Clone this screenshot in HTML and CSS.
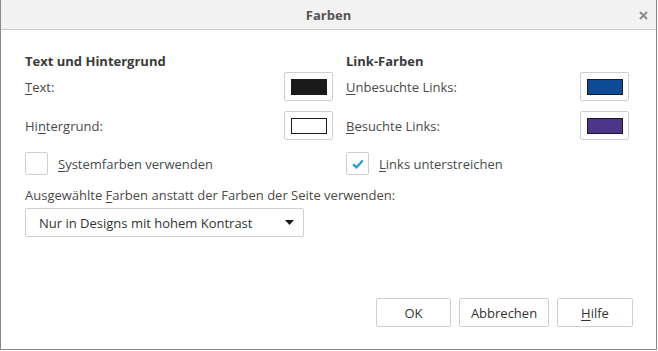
FILE: index.html
```html
<!DOCTYPE html>
<html lang="de">
<head>
<meta charset="utf-8">
<title>Farben</title>
<link rel="stylesheet" href="styles.css">
</head>
<body>
<div class="window">
  <div class="titlebar">
    <span class="title">Farben</span>
    <svg class="close" width="9" height="9" viewBox="0 0 9 9"><path d="M1 1 L8 8 M8 1 L1 8" stroke="#8c8c8c" stroke-width="2" fill="none"/></svg>
  </div>
  <div class="content">
    <div class="columns">
      <div class="col col-left">
        <div class="heading">Text und Hintergrund</div>
        <div class="row">
          <span class="label"><u>T</u>ext:</span>
          <button class="colorbtn"><span class="swatch swatch-black"></span></button>
        </div>
        <div class="row row-second">
          <span class="label">Hi<u>n</u>tergrund:</span>
          <button class="colorbtn"><span class="swatch swatch-white"></span></button>
        </div>
        <div class="checkrow">
          <span class="checkbox"></span>
          <span class="label"><u>S</u>ystemfarben verwenden</span>
        </div>
      </div>
      <div class="col col-right">
        <div class="heading">Link-Farben</div>
        <div class="row">
          <span class="label"><u>U</u>nbesuchte Links:</span>
          <button class="colorbtn"><span class="swatch swatch-blue"></span></button>
        </div>
        <div class="row row-second">
          <span class="label"><u>B</u>esuchte Links:</span>
          <button class="colorbtn"><span class="swatch swatch-purple"></span></button>
        </div>
        <div class="checkrow">
          <span class="checkbox">
            <svg width="12" height="10" viewBox="0 0 12 10"><path d="M1.2 5.2 L4.4 8.4 L10.8 1.4" stroke="#1d9ad8" stroke-width="2.2" fill="none"/></svg>
          </span>
          <span class="label label-check-right"><u>L</u>inks unterstreichen</span>
        </div>
      </div>
    </div>
    <div class="override-label">Ausgewählte <u>F</u>arben anstatt der Farben der Seite verwenden:</div>
    <div class="dropdown">
      <span>Nur in Designs mit hohem Kontrast</span>
      <svg class="arrow" width="9" height="5" viewBox="0 0 9 5"><path d="M0 0 H9 L4.5 5 Z" fill="#1a1a1a"/></svg>
    </div>
  </div>
  <div class="footer">
    <button class="btn btn-ok">OK</button>
    <button class="btn btn-cancel">Abbrechen</button>
    <button class="btn btn-help"><u>H</u>ilfe</button>
  </div>
</div>
</body>
</html>
```

FILE: styles.css
```css
html, body {
  margin: 0;
  padding: 0;
  background: #ffffff;
}

body {
  font-family: "Open Sans", "Noto Sans", sans-serif;
  font-size: 13px;
  color: #4a4a4a;
}

u {
  text-decoration: underline;
  text-underline-offset: 2px;
  text-decoration-thickness: 1px;
}

.window {
  box-sizing: border-box;
  width: 657px;
  height: 350px;
  border: 1px solid #8a8a8a;
  border-top: none;
  display: flex;
  flex-direction: column;
  background: #ffffff;
}

.titlebar {
  height: 29px;
  border-bottom: 1px solid #c8c8c8;
  background: #f2f2f2;
  display: flex;
  align-items: center;
  justify-content: center;
  position: relative;
}

.title {
  font-weight: 700;
  font-size: 13px;
  color: #555555;
}

.close {
  position: absolute;
  right: 8px;
  top: 11px;
}

.content {
  padding: 22px 0 0 24px;
}

.columns {
  display: grid;
  grid-template-columns: 308px 283px;
  column-gap: 13px;
}

.col {
  display: flex;
  flex-direction: column;
}

.heading {
  font-weight: 700;
  color: #3a3a3a;
  height: 18px;
  line-height: 18px;
  margin-bottom: 2px;
}

.row {
  display: flex;
  align-items: center;
  justify-content: space-between;
  height: 29px;
}

.row-second {
  margin-top: 10px;
}

.label {
  line-height: 18px;
}

.colorbtn {
  box-sizing: border-box;
  width: 49px;
  height: 29px;
  padding: 0;
  border: 1px solid #cfcfcf;
  border-radius: 2px;
  background: #ffffff;
  display: flex;
  align-items: center;
  justify-content: center;
}

.swatch {
  box-sizing: border-box;
  width: 36px;
  height: 16px;
  border: 1px solid #1a1a1a;
}

.swatch-black { background: #1a1a1a; }
.swatch-white { background: #ffffff; }
.swatch-blue { background: #0f4a96; }
.swatch-purple { background: #4d358a; }

.checkrow {
  display: flex;
  align-items: center;
  margin-top: 12px;
  height: 23px;
}

.checkbox {
  box-sizing: border-box;
  width: 23px;
  height: 23px;
  border: 1px solid #cfcfcf;
  border-radius: 2px;
  background: #ffffff;
  display: flex;
  align-items: center;
  justify-content: center;
  margin-right: 10px;
  flex: none;
}

.override-label {
  margin-top: 11px;
  line-height: 18px;
}

.dropdown {
  box-sizing: border-box;
  width: 279px;
  height: 29px;
  margin-top: 4px;
  border: 1px solid #cfcfcf;
  border-radius: 2px;
  display: flex;
  align-items: center;
  justify-content: space-between;
  padding: 0 9px 0 13px;
  color: #333333;
}

.footer {
  margin-top: auto;
  display: flex;
  justify-content: flex-end;
  gap: 8px;
  padding: 0 23px 22px 0;
}

.btn {
  box-sizing: border-box;
  height: 29px;
  border: 1px solid #cfcfcf;
  border-radius: 2px;
  background: #ffffff;
  font-family: inherit;
  font-size: 13px;
  color: #333333;
  padding: 0;
}

.btn-ok { width: 75px; }
.btn-cancel { width: 90px; }
.btn-help { width: 76px; }
```
